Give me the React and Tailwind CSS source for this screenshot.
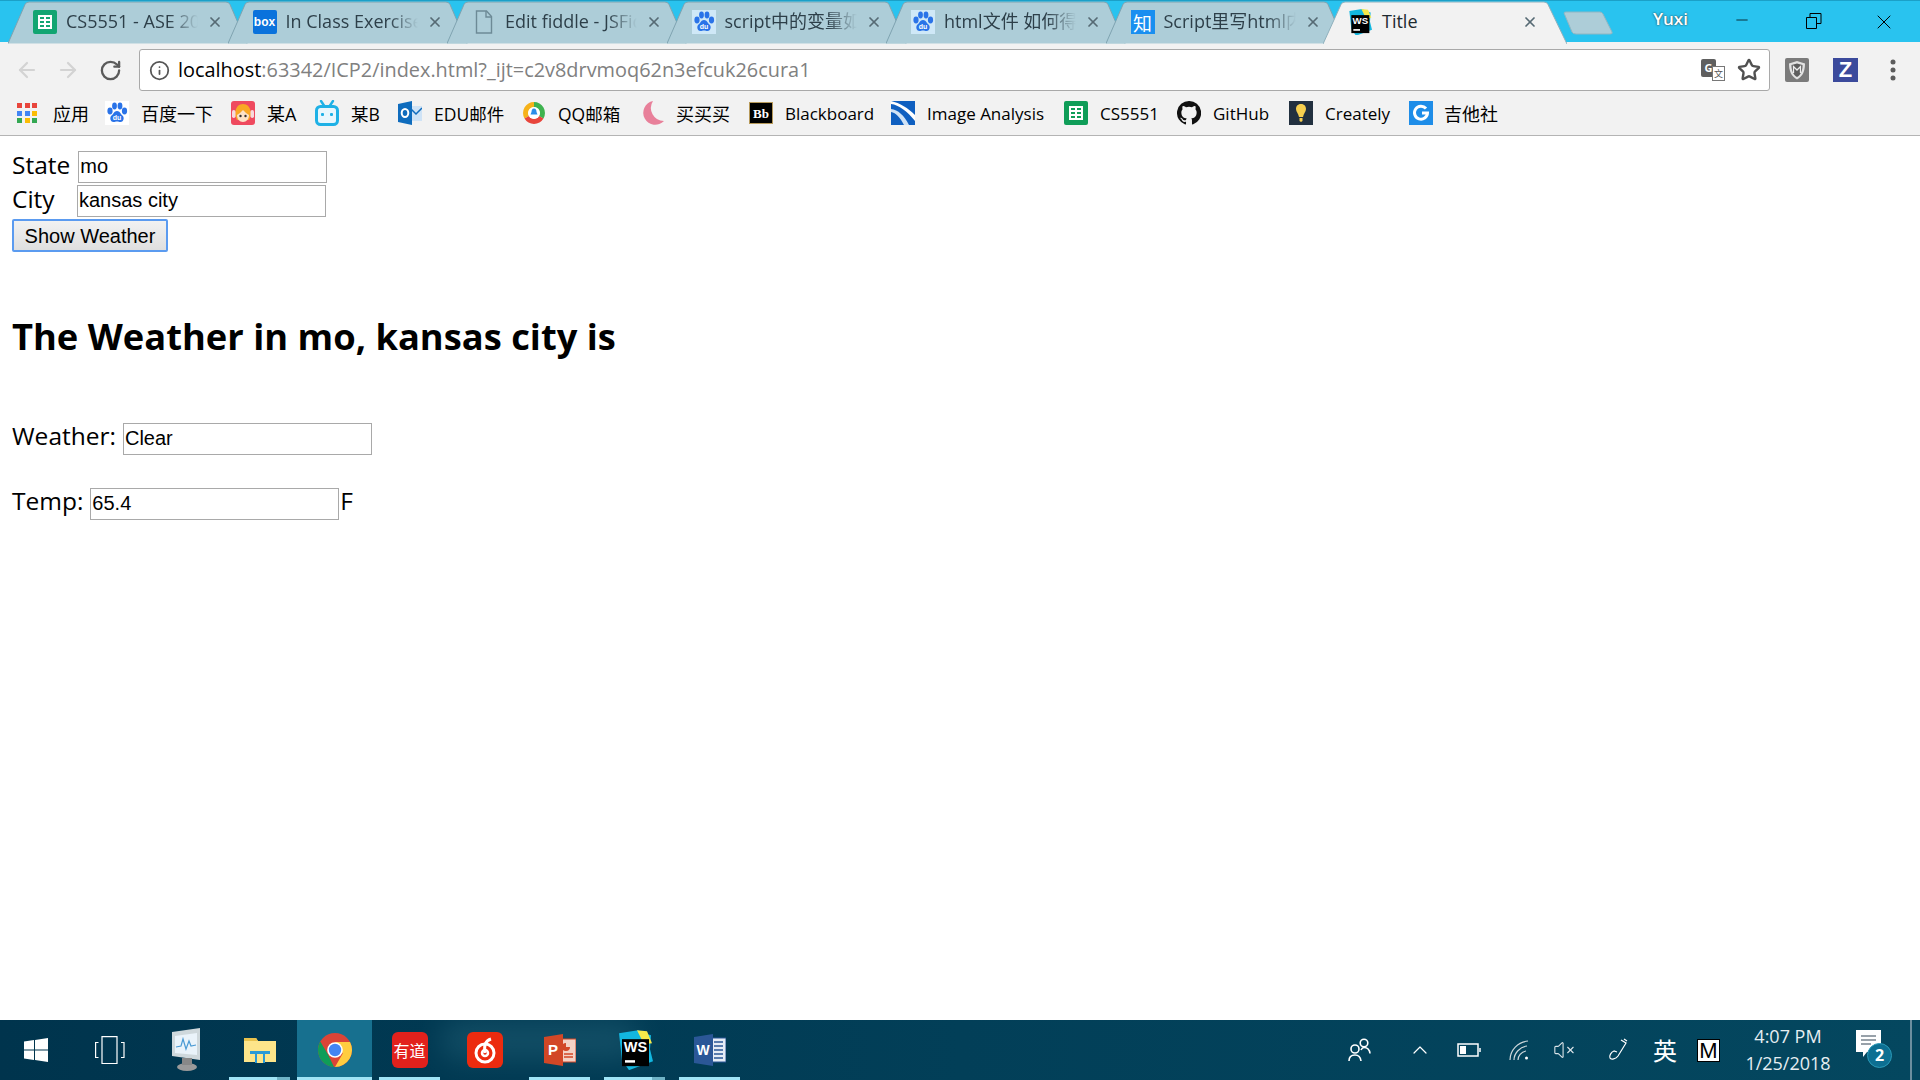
import React from "react";
import { ArrowLeft, ArrowRight, RotateCw, Info, Star, X, Minus, ChevronUp, VolumeX } from "lucide-react";

const SANS = "[font-family:'Open_Sans','Noto_Sans_CJK_SC',sans-serif]";

function Sheets({ s = 24, c = "#12a572" }) {
  return (
    <svg width={s} height={s} viewBox="0 0 24 24">
      <rect width="24" height="24" rx="2" fill={c} />
      <rect x="5" y="5" width="14" height="14" fill="#fff" />
      <path d="M7 7h4v2H7zM13 7h4v2h-4zM7 11h4v2H7zM13 11h4v2h-4zM7 15h4v2H7zM13 15h4v2h-4z" fill={c} />
    </svg>
  );
}
function BoxIcon() {
  return (
    <span className="w-[24px] h-[24px] rounded-[2px] bg-[#0a72dc] text-white text-[12px] font-bold flex items-center justify-center [font-family:'Liberation_Sans',sans-serif]">box</span>
  );
}
function Doc() {
  return (
    <svg width="18" height="24" viewBox="0 0 18 24" fill="none" stroke="#6d8a96" strokeWidth="1.4">
      <path d="M1.5 1h10l5 5.5V23h-15z" />
      <path d="M11 1v6h5.5" />
    </svg>
  );
}
function Paw({ bg = "#cfe8f7" }) {
  return (
    <svg width="24" height="24" viewBox="0 0 24 24">
      <rect width="24" height="24" fill={bg} />
      <g fill="#2a73e8">
        <ellipse cx="5" cy="10" rx="2.6" ry="3.4" />
        <ellipse cx="9.5" cy="5" rx="2.4" ry="3.4" />
        <ellipse cx="15" cy="5" rx="2.4" ry="3.4" />
        <ellipse cx="19.5" cy="10" rx="2.6" ry="3.4" />
        <path d="M12 10c-3 0-3.5 3-5.5 4.500C4.500 16 5 21 8.500 21c1.500 0 2-.5 3.500-.5s2 .5 3.500.5c3.500 0 4-5 2-6.500C15.500 13 15 10 12 10z" />
      </g>
      <text x="12" y="19" textAnchor="middle" fontSize="7" fontWeight="700" fill="#fff" fontFamily="Liberation Sans">du</text>
    </svg>
  );
}
function Zhi() {
  return <span className="w-[24px] h-[24px] bg-[#1a8ff0] text-white text-[19px] leading-none flex items-center justify-center [font-family:'Noto_Sans_CJK_SC',sans-serif]">知</span>;
}
function WS({ s = 24 }) {
  return (
    <svg width={s} height={s * 1.12} viewBox="0 0 36 40">
      <path d="M2 3l19-3 6 3 7 2-1 14 3 12-24 9-7-10z" fill="#12b7e0" />
      <path d="M20 0l10 1 5 12-8 1z" fill="#f5e94a" />
      <path d="M5 9h27v27H5z" fill="#000" />
      <text x="18.500" y="22" textAnchor="middle" fontSize="14.500" fontWeight="700" fill="#fff" fontFamily="Liberation Sans">WS</text>
      <rect x="8" y="30" width="10" height="2.500" fill="#fff" />
    </svg>
  );
}
function Apps() {
  const cols = ["#e8453c", "#e8453c", "#e8453c", "#4285f4", "#4285f4", "#fbbc05", "#34a853", "#fbbc05", "#34a853"];
  return (
    <span className="grid grid-cols-3 gap-[2.500px] w-[20px] h-[20px]">
      {cols.map((c, i) => (
        <span key={i} className="w-[5px] h-[5px]" style={{ background: c }} />
      ))}
    </span>
  );
}
function Girl() {
  return (
    <svg width="24" height="24" viewBox="0 0 24 24">
      <rect width="24" height="24" rx="3" fill="#ef4a5f" />
      <path d="M4 14C4 6 8 3 12 3s8 3 8 11l-2 5H6z" fill="#f9a825" />
      <path d="M6 14c2-1 4-3 6-5 2 2 4 4 6 5 0 4-2.500 7-6 7s-6-3-6-7z" fill="#fde3c8" />
      <circle cx="9.500" cy="15" r="1.200" fill="#333" />
      <circle cx="14.500" cy="15" r="1.200" fill="#333" />
      <rect x="1" y="9" width="3.500" height="8" rx="1.700" fill="#f7d9dd" />
      <rect x="19.500" y="9" width="3.500" height="8" rx="1.700" fill="#f7d9dd" />
    </svg>
  );
}
function Bili() {
  return (
    <svg width="24" height="26" viewBox="0 0 24 26">
      <path d="M6 1l4 6M18 1l-4 6" stroke="#1eb1e6" strokeWidth="2.400" strokeLinecap="round" />
      <rect x="1.500" y="6.500" width="21" height="18" rx="4" fill="#e9f7fd" stroke="#1eb1e6" strokeWidth="3" />
      <rect x="6" y="13" width="3" height="3" rx="1" fill="#1eb1e6" />
      <rect x="15" y="13" width="3" height="3" rx="1" fill="#1eb1e6" />
    </svg>
  );
}
function Outlook() {
  return (
    <svg width="24" height="24" viewBox="0 0 24 24">
      <path d="M11 5h13v15H11z" fill="#cfe3f6" />
      <path d="M13 8l5 5 6-6" fill="none" stroke="#0f6cbd" strokeWidth="1.500" />
      <path d="M0 3l14-3v24L0 21z" fill="#0f6cbd" />
      <ellipse cx="7" cy="12" rx="3.300" ry="4" fill="none" stroke="#fff" strokeWidth="2" />
    </svg>
  );
}
function QQMail() {
  return (
    <svg width="24" height="24" viewBox="0 0 24 24">
      <path d="M12 1a11 11 0 0 0-9.500 16.500L7 15a6 6 0 0 1 5-8.900z" fill="#f6b21a" />
      <path d="M12 1a11 11 0 0 1 9.500 16.500L17 15a6 6 0 0 0-5-8.900z" fill="#3fb34f" />
      <path d="M2.500 17.500a11 11 0 0 0 19 0L17 15a6 6 0 0 1-10 0z" fill="#e8453c" />
      <circle cx="12" cy="12" r="6" fill="#fff" />
      <path d="M12 7.500c-2 0-2.500 2-2.500 3.500l-1 2.500h7l-1-2.500c0-1.500-.5-3.500-2.500-3.500z" fill="#2a8de8" />
    </svg>
  );
}
function Moon() {
  return (
    <svg width="24" height="24" viewBox="0 0 24 24">
      <path d="M13 0A12 12 0 1 0 24 20 13 13 0 0 1 13 0z" fill="#e8809a" />
    </svg>
  );
}
function Bb() {
  return (
    <span className="w-[24px] h-[22px] bg-black border border-[#b79a5a] text-white text-[13px] leading-none font-bold flex items-center justify-center [font-family:'Liberation_Serif',serif]">Bb</span>
  );
}
function ImageA() {
  return (
    <svg width="24" height="24" viewBox="0 0 24 24">
      <rect width="24" height="24" fill="#0f5fc0" />
      <path d="M0 3c8 1 16 7 24 17v-6C17 7 9 2 0 0z" fill="#fff" />
      <path d="M0 8c7 1 13 6 18 16h-5C9 16 5 12 0 11z" fill="#cfe2f6" />
    </svg>
  );
}
function GitHub() {
  return (
    <svg width="24" height="24" viewBox="0 0 16 16" fill="#111">
      <path d="M8 0a8 8 0 0 0-2.530 15.590c.4.070.55-.17.55-.38v-1.340c-2.230.48-2.700-1.070-2.700-1.070-.36-.93-.89-1.170-.89-1.170-.73-.5.050-.49.050-.49.800.060 1.220.830 1.220.830.720 1.220 1.870.870 2.330.660.070-.520.280-.870.510-1.070-1.780-.200-3.640-.890-3.640-3.950 0-.870.310-1.590.820-2.150-.080-.200-.360-1.020.080-2.120 0 0 .670-.210 2.200.820a7.600 7.600 0 0 1 4 0c1.530-1.040 2.200-.820 2.200-.820.440 1.100.160 1.920.080 2.120.510.560.820 1.270.82 2.150 0 3.070-1.870 3.750-3.650 3.950.290.250.540.730.540 1.480v2.200c0 .210.150.460.550.380A8 8 0 0 0 8 0z" />
    </svg>
  );
}
function Creately() {
  return (
    <svg width="24" height="24" viewBox="0 0 24 24">
      <rect width="24" height="24" fill="#22303f" />
      <path d="M12 3c-3.500 0-5 2.500-5 5 0 3 2.500 4.500 3 8h4c.5-3.500 3-5 3-8 0-2.500-1.500-5-5-5z" fill="#f6cf4f" />
      <path d="M10.500 17h3v3l-1.500 1-1.500-1z" fill="#f6cf4f" />
    </svg>
  );
}
function Jita() {
  return (
    <svg width="24" height="24" viewBox="0 0 24 24">
      <rect width="24" height="24" fill="#1e8de8" />
      <path d="M17 7.500A6.500 6.500 0 1 0 18.500 12h-5.500" fill="none" stroke="#fff" strokeWidth="3" />
    </svg>
  );
}

function TabShape({ active }) {
  return (
    <svg className="absolute left-0 top-0" width={active ? 244 : 240} height="43" viewBox={active ? "0 0 244 43" : "0 0 240 43"}>
      {active ? (
        <path d="M0 43L18 3.500Q19 1 22 1H221Q224 1 225 3.500L244 43" fill="#f2f2f2" stroke="#8fb0bc" />
      ) : (
        <path d="M0 42.500L17 3.500Q18 1 21 1H218Q221 1 222 3.500L239 42.500" fill="#adcdd8" stroke="#7fa3b0" />
      )}
    </svg>
  );
}

function Tab({ icon, title, iconBox = "w-[24px]" }) {
  return (
    <div className="relative w-[240px] h-[42px] -mr-[20.500px] shrink-0">
      <TabShape />
      <div className="relative flex items-center h-[42px] pl-[25px]">
        <span className={`${iconBox} flex justify-center shrink-0`}>{icon}</span>
        <span className="ml-[9px] -mt-[2px] w-[132px] overflow-hidden whitespace-nowrap text-[18px] text-[#2d3f49] [mask-image:linear-gradient(to_right,black_78%,transparent)]">{title}</span>
        <X className="ml-[9px] text-[#566a74]" size={16} strokeWidth={2.6} />
      </div>
    </div>
  );
}

const bookmarks = [
  { i: <Apps />, t: "应用", w: "w-[88px]", g: "gap-[12px]", j: "justify-start", z: "text-[18px]" },
  { i: <Paw bg="#ffffff" />, t: "百度一下", w: "w-[126px]", g: "gap-[12px]", j: "justify-center", z: "text-[18px]" },
  { i: <Girl />, t: "某A", w: "w-[84px]", g: "gap-[12px]", j: "justify-center", z: "text-[18px]" },
  { i: <Bili />, t: "某B", w: "w-[83px]", g: "gap-[12px]", j: "justify-center", z: "text-[17.500px]" },
  { i: <Outlook />, t: "EDU邮件", w: "w-[124px]", g: "gap-[12px]", j: "justify-center", z: "text-[17.500px]" },
  { i: <QQMail />, t: "QQ邮箱", w: "w-[118px]", g: "gap-[12px]", j: "justify-center", z: "text-[17.500px]" },
  { i: <Moon />, t: "买买买", w: "w-[109px]", g: "gap-[12px]", j: "justify-center", z: "text-[18px]" },
  { i: <Bb />, t: "Blackboard", w: "w-[142px]", g: "gap-[12px]", j: "justify-center", z: "text-[17px]" },
  { i: <ImageA />, t: "Image Analysis", w: "w-[173px]", g: "gap-[12px]", j: "justify-center", z: "text-[17px]" },
  { i: <Sheets c="#0f9d58" />, t: "CS5551", w: "w-[113px]", g: "gap-[12px]", j: "justify-center", z: "text-[17px]" },
  { i: <GitHub />, t: "GitHub", w: "w-[112px]", g: "gap-[12px]", j: "justify-center", z: "text-[17px]" },
  { i: <Creately />, t: "Creately", w: "w-[120px]", g: "gap-[12px]", j: "justify-center", z: "text-[17px]" },
  { i: <Jita />, t: "吉他社", w: "w-[110px]", g: "gap-[11px]", j: "justify-center", z: "text-[18px]" },
];

function Field({ value, className = "" }) {
  return (
    <input
      readOnly
      value={value}
      className={`w-[249px] h-[32px] border border-[#a9a9a9] bg-white pl-[1px] pr-[2px] pb-[2px] text-[20px] text-black [font-family:'Liberation_Sans',sans-serif] outline-none ${className}`}
    />
  );
}

function Slot({ children, w = "w-[75px]", bar, split, active }) {
  return (
    <div className={`${w} h-[60px] relative flex items-center justify-center shrink-0 ${active ? "bg-[#17708f]" : ""}`}>
      {children}
      {bar && (
        <span className={`absolute bottom-0 h-[3px] bg-[#a0e4f6] flex justify-end ${active ? "inset-x-0" : "inset-x-[7px]"}`}>
          {split && <span className="w-[13px] h-[3px] bg-[#6fb3c6]" />}
        </span>
      )}
    </div>
  );
}

export default function App() {
  return (
    <div className={`w-[1920px] h-[1080px] overflow-hidden flex flex-col bg-white ${SANS}`}>
      {/* tab strip */}
      <div className="h-[42px] bg-[#29c3ef] flex pl-[8px] relative border-t border-[#1ba0c8] shrink-0">
        <Tab icon={<Sheets />} title="CS5551 - ASE 2018" />
        <Tab icon={<BoxIcon />} title="In Class Exercise 1" />
        <Tab icon={<Doc />} title="Edit fiddle - JSFiddle" />
        <Tab icon={<Paw />} title="script中的变量如何" />
        <Tab icon={<Paw />} title="html文件 如何得到" />
        <Tab icon={<Zhi />} title="Script里写html内容" />
        <div className="relative w-[244px] h-[42px] -ml-[2px] -mr-[2px] shrink-0">
          <TabShape active />
          <div className="relative flex items-center h-[42px] pl-[25px]">
            <WS s={24} />
            <span className="ml-[10px] -mt-[2px] w-[140px] text-[18px] text-[#1e2a30]">Title</span>
            <X className="text-[#566a74]" size={16} strokeWidth={2.6} />
          </div>
        </div>
        <svg className="mt-[10px] shrink-0 -ml-[3px]" width="52" height="24" viewBox="0 0 52 24">
          <path d="M2 2Q2 1 4 1H38Q40 1 41 3L50 21Q51 23 48 23H14Q11 23 10 21z" fill="#adcdd8" stroke="#8fb6c3" />
        </svg>
        <span className="ml-[39px] mt-[6px] w-[34px] text-[17px] font-semibold leading-[24px] text-white [text-shadow:0_0_2px_#222]">Yuxi</span>
        <Minus className="ml-[46px] mt-[10px] text-black" size={18} strokeWidth={1} />
        <svg className="ml-[55px] mt-[12px]" width="16" height="16" viewBox="0 0 16 16" fill="none" stroke="#000">
          <path d="M.5 4.500h10v11H.5zM4 4.500V.5h11v10h-4.500" />
        </svg>
        <X className="ml-[50px] mt-[9px] text-black" size={24} strokeWidth={1} />
      </div>

      {/* toolbar */}
      <div className="h-[49px] bg-[#f2f2f2] flex items-end shrink-0">
        <div className="flex items-center h-[42px] w-[139px] pl-[15px] shrink-0">
          <ArrowLeft className="text-[#d3d3d3]" size={24} strokeWidth={2.2} />
          <ArrowRight className="ml-[17px] text-[#d3d3d3]" size={24} strokeWidth={2.2} />
          <RotateCw className="ml-[19px] text-[#5a5a5a]" size={23} strokeWidth={2.4} />
        </div>
        <div className="w-[1631px] h-[42px] bg-white border border-[#a9a9a9] rounded-[3px] flex items-center shrink-0 pl-[9px] pr-[8px]">
          <Info className="text-[#555]" size={21} strokeWidth={2} />
          <span className="ml-[8px] text-[19.900px] whitespace-nowrap text-[#808080]">
            <span className="text-black">localhost</span>:63342/ICP2/index.html?_ijt=c2v8drvmoq62n3efcuk26cura1
          </span>
          <span className="ml-auto w-[24px] h-[22px] relative shrink-0">
            <span className="absolute left-0 top-0 w-[15px] h-[18px] rounded-[2px] bg-[#5f5f5f] text-white text-[11px] font-bold leading-[18px] text-center">G</span>
            <span className="absolute right-0 bottom-0 w-[13px] h-[15px] border border-[#777] bg-white text-[#555] text-[9px] leading-[13px] text-center">文</span>
          </span>
          <Star className="ml-[12px] text-[#505050]" size={24} strokeWidth={2.4} />
        </div>
        <div className="flex items-center h-[42px] flex-1 pl-[15px]">
          <svg width="24" height="24" viewBox="0 0 24 24">
            <rect width="24" height="24" rx="2" fill="#7b7b7b" />
            <path d="M12 3l8 2.500c0 8-2.500 13-8 16-5.500-3-8-8-8-16z" fill="#e3e3e3" />
            <path d="M12 5.500l5.500 1.500c0 6-2 10-5.500 12-3.500-2-5.500-6-5.500-12z" fill="#5e5e5e" />
            <path d="M8.500 15V8.500L12 12l3.500-3.500V15" fill="none" stroke="#eee" strokeWidth="1.300" />
          </svg>
          <span className="ml-[24px] w-[25px] h-[24px] bg-[#3b4a9c] text-white text-[22px] font-bold leading-[24px] text-center [font-family:'Liberation_Sans',sans-serif]">Z</span>
          <svg className="ml-[32px]" width="6" height="22" viewBox="0 0 6 22" fill="#5c5c5c">
            <circle cx="3" cy="3" r="2.500" /><circle cx="3" cy="11" r="2.500" /><circle cx="3" cy="19" r="2.500" />
          </svg>
        </div>
      </div>

      {/* bookmarks */}
      <div className="h-[45px] bg-[#f2f2f2] border-b border-[#b4b4b4] flex items-center pl-[17px] shrink-0">
        {bookmarks.map((b) => (
          <div key={b.t} className={`${b.w} ${b.g} flex items-center shrink-0`}>
            <span className={`w-[24px] flex ${b.j} items-center shrink-0`}>{b.i}</span>
            <span className={`${b.z} mt-[2px] leading-[24px] whitespace-nowrap text-black`}>{b.t}</span>
          </div>
        ))}
      </div>

      {/* page */}
      <main className="flex-1 bg-white pl-[12px] pt-[15px] text-black min-h-0">
        <div className="flex items-center gap-[8px] h-[32px] text-[24.500px]">
          <span className="-mt-[4px]">State</span>
          <Field value="mo" />
        </div>
        <div className="flex items-center h-[32px] mt-[2px] text-[24.500px]">
          <span className="w-[65px] -mt-[4px]">City</span>
          <Field value="kansas city" />
        </div>
        <button className="block mt-[2px] w-[156px] h-[33px] pb-[4px] rounded-[2px] border-2 border-[#5b9bf0] bg-gradient-to-b from-[#f2f2f2] to-[#dfdfdf] text-[20px] text-black [font-family:'Liberation_Sans',sans-serif]">
          Show Weather
        </button>
        <h1 className="mt-[55px] h-[58px] text-[36.300px] leading-[58px] font-bold whitespace-nowrap">The Weather in mo, kansas city is</h1>
        <div className="mt-[58px] flex items-center gap-[7px] h-[32px] text-[24.500px]">
          <span className="-mt-[5px]">Weather:</span>
          <Field value="Clear" />
        </div>
        <div className="mt-[33px] flex items-center gap-[7px] h-[32px] text-[24.500px]">
          <span className="-mt-[5px]">Temp:</span>
          <Field value="65.4" />
          <span className="-ml-[6px] -mt-[5px]">F</span>
        </div>
      </main>

      {/* taskbar */}
      <div className="h-[60px] shrink-0 flex items-center bg-gradient-to-r from-[#00344d] via-[#023f58] to-[#04475f] relative overflow-hidden">
        <span className="absolute left-[440px] top-0 w-[200px] h-[40px] rounded-full bg-[#2b6b80] opacity-40 blur-[14px]" />
        <Slot w="w-[72px]">
          <svg width="24" height="24" viewBox="0 0 24 24" fill="#fff">
            <path d="M0 3.500l10-1.400v9.400H0zM11 2l13-2v11.500H11zM0 12.500h10v9.400L0 20.500zM11 12.500h13V24l-13-2z" />
          </svg>
        </Slot>
        <Slot>
          <svg width="30" height="28" viewBox="0 0 30 28" fill="none" stroke="#fff" strokeWidth="1.200">
            <path d="M7 .6h15v27H7zM3.500 6.500H.6v15h2.900M26 6.500h3v15h-3" />
          </svg>
        </Slot>
        <Slot>
          <svg width="33" height="44" viewBox="0 0 33 44">
            <path d="M4 4L32 0v32L4 28z" fill="#cfd8dc" />
            <path d="M7 8l22-3v22L7 25z" fill="#eaf3fa" />
            <path d="M8 19l5-1 2-7 3 10 3-8 2 5 5-1" fill="none" stroke="#4a9ad4" strokeWidth="1.200" />
            <ellipse cx="19" cy="39" rx="10" ry="4" fill="#9a9a9a" />
            <rect x="14" y="30" width="10" height="7" fill="#888" />
          </svg>
        </Slot>
        <Slot bar split>
          <svg width="32" height="26" viewBox="0 0 32 26">
            <path d="M0 1h12l2 3h18v21H0z" fill="#fde58a" />
            <path d="M0 1h12l2 3H0z" fill="#e9c24d" />
            <path d="M6 14h20v3H21v9H11v-9H6z" fill="#2a9ad6" />
            <rect x="13" y="17" width="6" height="9" fill="#fde58a" />
          </svg>
        </Slot>
        <Slot bar active>
          <svg width="34" height="34" viewBox="0 0 34 34">
            <circle cx="17" cy="17" r="17" fill="#db4437" />
            <path d="M17 34A17 17 0 0 1 2.300 8.500L10 21.500l6 12.500z" fill="#0f9d58" />
            <path d="M17 34l7.800-13.500L17 9h15a17 17 0 0 1-15 25z" fill="#ffcd40" />
            <circle cx="17" cy="17" r="7.800" fill="#fff" />
            <circle cx="17" cy="17" r="6.200" fill="#4285f4" />
          </svg>
        </Slot>
        <Slot bar>
          <span className="w-[36px] h-[36px] rounded-[6px] bg-[#e2211c] text-white text-[16px] leading-none flex items-center justify-center [font-family:'Noto_Sans_CJK_SC',sans-serif]">有道</span>
        </Slot>
        <Slot>
          <svg width="36" height="36" viewBox="0 0 36 36">
            <rect width="36" height="36" rx="6" fill="#ec2b0f" />
            <circle cx="18" cy="21" r="9" fill="none" stroke="#fff" strokeWidth="3" />
            <circle cx="18" cy="21" r="3" fill="none" stroke="#fff" strokeWidth="2.500" />
            <path d="M18 21c-1-6-1-12 6-14" fill="none" stroke="#fff" strokeWidth="3" />
          </svg>
        </Slot>
        <Slot bar>
          <svg width="32" height="32" viewBox="0 0 32 32">
            <rect x="16" y="5" width="16" height="23" fill="#f3d2c5" stroke="#d24726" />
            <path d="M22 9a4 4 0 1 0 4 4h-4z" fill="#d24726" />
            <path d="M20 20h9M20 23h9" stroke="#d24726" strokeWidth="1.500" />
            <path d="M0 3l19-3v32L0 29z" fill="#d24726" />
            <text x="9" y="21" textAnchor="middle" fontSize="15" fontWeight="700" fill="#fff" fontFamily="Liberation Sans">P</text>
          </svg>
        </Slot>
        <Slot bar split><WS s={36} /></Slot>
        <Slot bar>
          <svg width="32" height="32" viewBox="0 0 32 32">
            <rect x="16" y="4" width="16" height="24" fill="#e6ecf5" stroke="#2b5797" />
            <path d="M20 8h9M20 12h9M20 16h9M20 20h9M20 24h9" stroke="#2b5797" strokeWidth="1.500" />
            <path d="M0 3l19-3v32L0 29z" fill="#2b5797" />
            <text x="9" y="21" textAnchor="middle" fontSize="14" fontWeight="700" fill="#fff" fontFamily="Liberation Sans">W</text>
          </svg>
        </Slot>

        {/* tray */}
        <div className="ml-auto flex items-center h-[60px] text-white">
          <svg width="23" height="24" viewBox="0 0 23 24" fill="none" stroke="#fff" strokeWidth="1.600">
            <circle cx="7" cy="11" r="4" /><path d="M1 23c0-4 2-6 6-6s5.500 2 6 6" />
            <circle cx="16" cy="5" r="3.800" /><path d="M13 12c1-2 2-2.500 3-2.500 3 0 5.500 2 6 6" />
          </svg>
          <ChevronUp className="ml-[37px] text-white" size={24} strokeWidth={1.2} />
          <svg className="ml-[25px]" width="24" height="14" viewBox="0 0 24 14" fill="none" stroke="#fff" strokeWidth="1.500">
            <rect x="1" y="1" width="20" height="12" />
            <rect x="3" y="3" width="6" height="8" fill="#fff" stroke="none" />
            <path d="M23 5v4" />
          </svg>
          <svg className="ml-[28px]" width="20" height="20" viewBox="0 0 20 20" fill="none" stroke="#cfd8dc" strokeWidth="1.200">
            <path d="M1 20C1 10 9 2 19 1M5 20c0-7 6-13 13-14M9 20c0-4 3-8 8-9" />
            <circle cx="17.500" cy="18" r="1.500" fill="#fff" stroke="none" />
          </svg>
          <VolumeX className="ml-[24px] text-[#dbe4e8]" size={22} strokeWidth={1.2} />
          <svg className="ml-[33px]" width="21" height="24" viewBox="0 0 21 24" fill="none" stroke="#fff" strokeWidth="1.200">
            <path d="M13 2l5 3-8 13c-2 3-7 4-8 2-1-2 1-6 4-7l3 1M16 1l3 2" />
          </svg>
          <span className="ml-[24px] w-[22px] text-[24px] leading-none [font-family:'Noto_Sans_CJK_SC',sans-serif]">英</span>
          <span className="ml-[22px] w-[23px] h-[23px] bg-white border border-black text-black text-[22px] leading-[22px] text-center [font-family:'Liberation_Sans',sans-serif]">M</span>
          <div className="ml-[22px] w-[92px] text-center text-[18px] leading-[27px] text-[#e6eef2]">
            <div>4:07 PM</div>
            <div>1/25/2018</div>
          </div>
          <div className="ml-[22px] w-[37px] h-[40px] relative">
            <svg width="25" height="28" viewBox="0 0 25 28" className="absolute left-0 top-0">
              <path d="M0 0h25v22H11l-4 5v-5H0z" fill="#fff" />
              <path d="M5 6h15M5 10h15M5 14h10" stroke="#345" strokeWidth="1.200" />
            </svg>
            <span className="absolute left-[11px] top-[13px] w-[25px] h-[25px] rounded-full bg-[#0d6f92] border border-[#2a9ab8] text-white text-[16px] font-bold leading-[23px] text-center">2</span>
          </div>
          <span className="ml-[17px] w-[2px] h-[60px] bg-[#6b8f9f]" />
          <span className="w-[8px]" />
        </div>
      </div>
    </div>
  );
}
